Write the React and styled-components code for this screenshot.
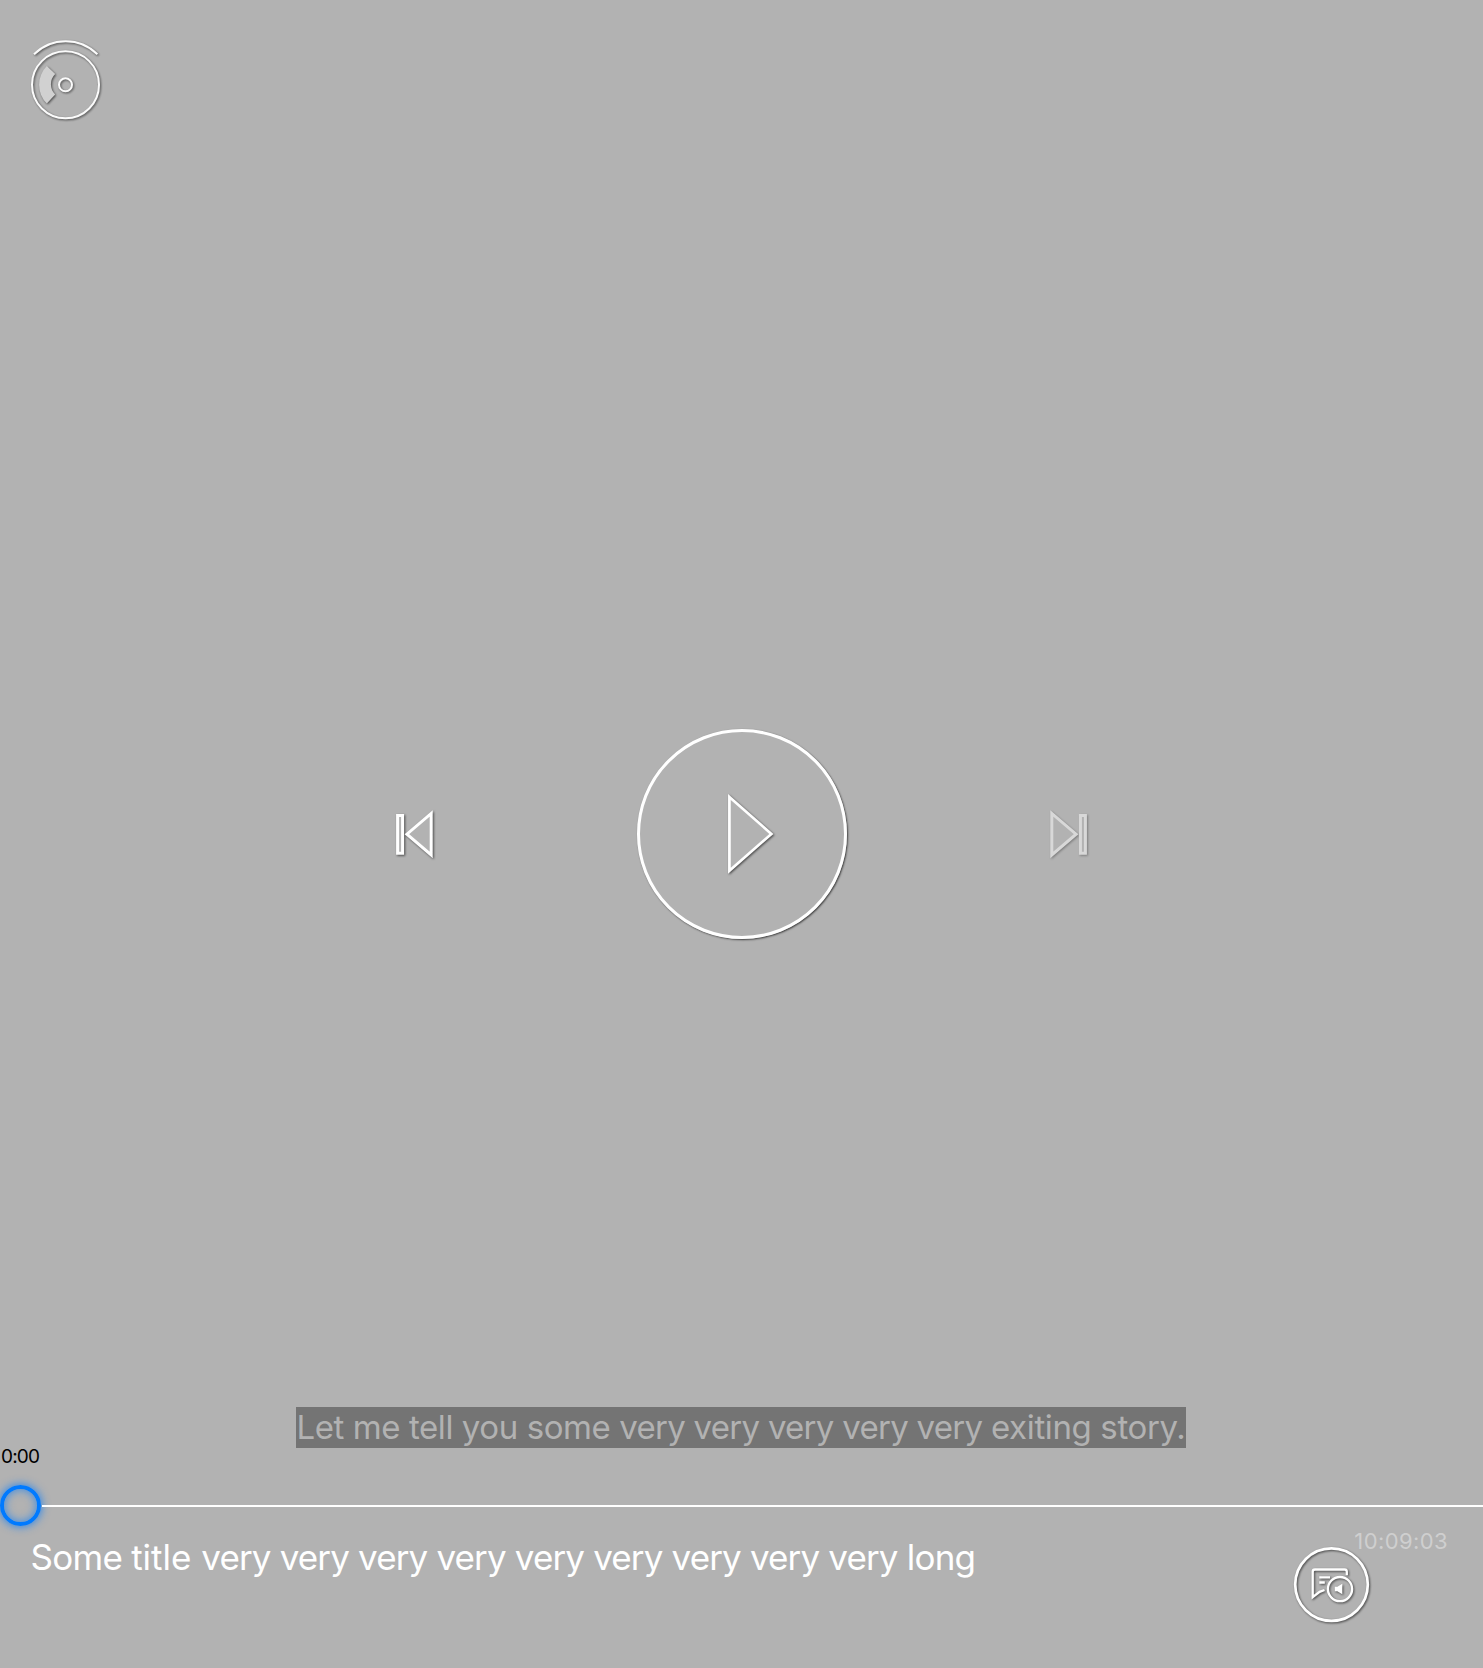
import React from "react";
import styled, { createGlobalStyle } from "styled-components";

const GlobalStyle = createGlobalStyle`
  html, body { margin: 0; background: #b2b2b2; }
  * { box-sizing: border-box; }
`;

const Player = styled.main`
  display: flex;
  flex-direction: column;
  width: 100%;
  height: 1668px;
  overflow: hidden;
  background: #b2b2b2;
  color: #fff;
  font-family: Inter, "Liberation Sans", sans-serif;
`;

const Header = styled.header`
  display: flex;
  height: 724px;
  padding: 36px 26px;
`;

const Icon = styled.svg`
  display: block;
  flex: none;
  overflow: visible;
  fill: ${(p) => (p.$solid ? "#b2b2b2" : "none")};
  stroke: #fff;
  stroke-width: ${(p) => p.$line || 2.7};
  filter: drop-shadow(1px 1px ${(p) => (p.$solid ? "1px" : "1.3px")} rgba(0, 0, 0, 0.6));
`;

const IconButton = styled.button`
  display: block;
  padding: 0;
  border: 0;
  background: none;
  opacity: ${(p) => (p.disabled ? 0.5 : 1)};
`;

const PlayButton = styled.button`
  display: flex;
  align-items: center;
  justify-content: center;
  width: 210px;
  height: 210px;
  padding: 0 0 0 18px;
  border: 3px solid #fff;
  border-radius: 50%;
  background: none;
  box-shadow: 1px 1px 2px rgba(0, 0, 0, 0.65);
`;

const Controls = styled.div`
  display: flex;
  align-items: center;
  justify-content: center;
  gap: 203.5px;
  height: 220px;
`;

const SubtitleRow = styled.div`
  display: flex;
  justify-content: center;
  padding: 463px 1px 0 0;
`;

const Subtitle = styled.span`
  width: 890px;
  height: 41px;
  padding-left: 0.5px;
  background: #747474;
  color: #b2b2b2;
  font-size: 33px;
  line-height: 41px;
  white-space: pre;
`;

const Phrase = styled.span`
  letter-spacing: ${(p) => p.$track}px;
`;

const Timeline = styled.div`
  height: 79px;
`;

const Elapsed = styled.div`
  height: 37px;
  padding-left: 1px;
  color: #000;
  font-size: 19px;
  line-height: 17px;
  letter-spacing: -0.85px;
`;

const Track = styled.div`
  display: flex;
  align-items: center;
  gap: 1px;
  height: 42px;
`;

const Thumb = styled.div`
  flex: none;
  width: 41px;
  height: 41px;
  margin-bottom: 1px;
  border: 4px solid #007aff;
  border-radius: 50%;
  box-shadow: 0 0 10px rgba(0, 122, 255, 0.9), inset 0 0 10px rgba(0, 122, 255, 0.7);
`;

const Line = styled.div`
  flex: 1;
  height: 2px;
  background: #fff;
`;

const Footer = styled.footer`
  display: flex;
  align-items: flex-start;
  justify-content: space-between;
  padding: 2px 35px 0 30.5px;
`;

const Title = styled.h1`
  margin: 6px 0 0;
  font-size: 35px;
  font-weight: 400;
  line-height: 44px;
  white-space: pre;
`;

const Side = styled.div`
  display: flex;
  flex-direction: column;
  width: 154px;
`;

const Duration = styled.span`
  height: 18px;
  text-align: right;
  color: #cfcfcf;
  font-size: 22px;
  line-height: 24px;
  letter-spacing: 0.4px;
`;

function DiscIcon() {
  return (
    <Icon width="80" height="88" viewBox="26 36 80 88" $line={2} opacity="0.95">
      <path d="M34 54.3A45 45 0 0 1 97.4 54.3" />
      <circle cx="65.5" cy="84.8" r="33.5" />
      <circle cx="65.5" cy="84.8" r="6.5" />
      <path d="M46.8 66.1A26.5 26.5 0 0 0 46.8 103.5L55.2 94.6A14.5 14.5 0 0 1 55.2 74Z" fill="#d3d3d3" stroke="none" />
    </Icon>
  );
}

function SkipIcon({ forward }) {
  return (
    <Icon width="37" height="48" viewBox="0 0 37 48" $line={3} $solid>
      <g transform={forward ? "translate(37 0) scale(-1 1)" : undefined}>
        <path d="M1.6 5.6H6.6V43.2H1.6Z" />
        <path d="M35.2 3.4V45L10.9 24.2Z" />
      </g>
    </Icon>
  );
}

function PlayIcon() {
  return (
    <Icon width="46" height="80" viewBox="0 0 46 80" $solid>
      <path d="M1.4 3.1L43.4 39.9L1.4 76.7Z" />
    </Icon>
  );
}

function AudioSubtitlesIcon() {
  return (
    <Icon width="76" height="76" viewBox="0 0 76 76">
      <circle cx="37.5" cy="37.6" r="36.3" />
      <g strokeWidth="2.3">
        <path d="M52.8 28.3V24.7Q52.8 22.5 50.6 22.5H21Q18.7 22.5 18.7 24.8V50.2L25.6 44.8L30.5 43" />
        <path d="M25.3 30.3H36M25.3 35.5H30.8" />
        <circle cx="46" cy="42.1" r="12.1" />
      </g>
      <path d="M40.8 39.8H43.3L48.3 36.8V47.3L43.3 44.2H40.8Z" fill="#fff" stroke="none" />
    </Icon>
  );
}

export default function App() {
  return (
    <Player>
      <GlobalStyle />
      <Header>
        <DiscIcon />
      </Header>
      <Controls>
        <IconButton aria-label="Previous"><SkipIcon /></IconButton>
        <PlayButton aria-label="Play"><PlayIcon /></PlayButton>
        <IconButton aria-label="Next" disabled><SkipIcon forward /></IconButton>
      </Controls>
      <SubtitleRow>
        <Subtitle>
          <Phrase $track={-0.42}>{"Let me tell you some "}</Phrase>
          <Phrase $track={-0.71}>{"very very very very very "}</Phrase>
          <Phrase $track={-0.37}>exiting story.</Phrase>
        </Subtitle>
      </SubtitleRow>
      <Timeline>
        <Elapsed>0:00</Elapsed>
        <Track>
          <Thumb />
          <Line />
        </Track>
      </Timeline>
      <Footer>
        <Title>
          <Phrase $track={-0.74}>{"Some "}</Phrase>
          <Phrase $track={0}>{"title "}</Phrase>
          <Phrase $track={-0.85}>{"very very very very very very very very very "}</Phrase>
          <Phrase $track={-0.74}>long</Phrase>
        </Title>
        <Side>
          <Duration>10:09:03</Duration>
          <IconButton aria-label="Audio and subtitles"><AudioSubtitlesIcon /></IconButton>
        </Side>
      </Footer>
    </Player>
  );
}
